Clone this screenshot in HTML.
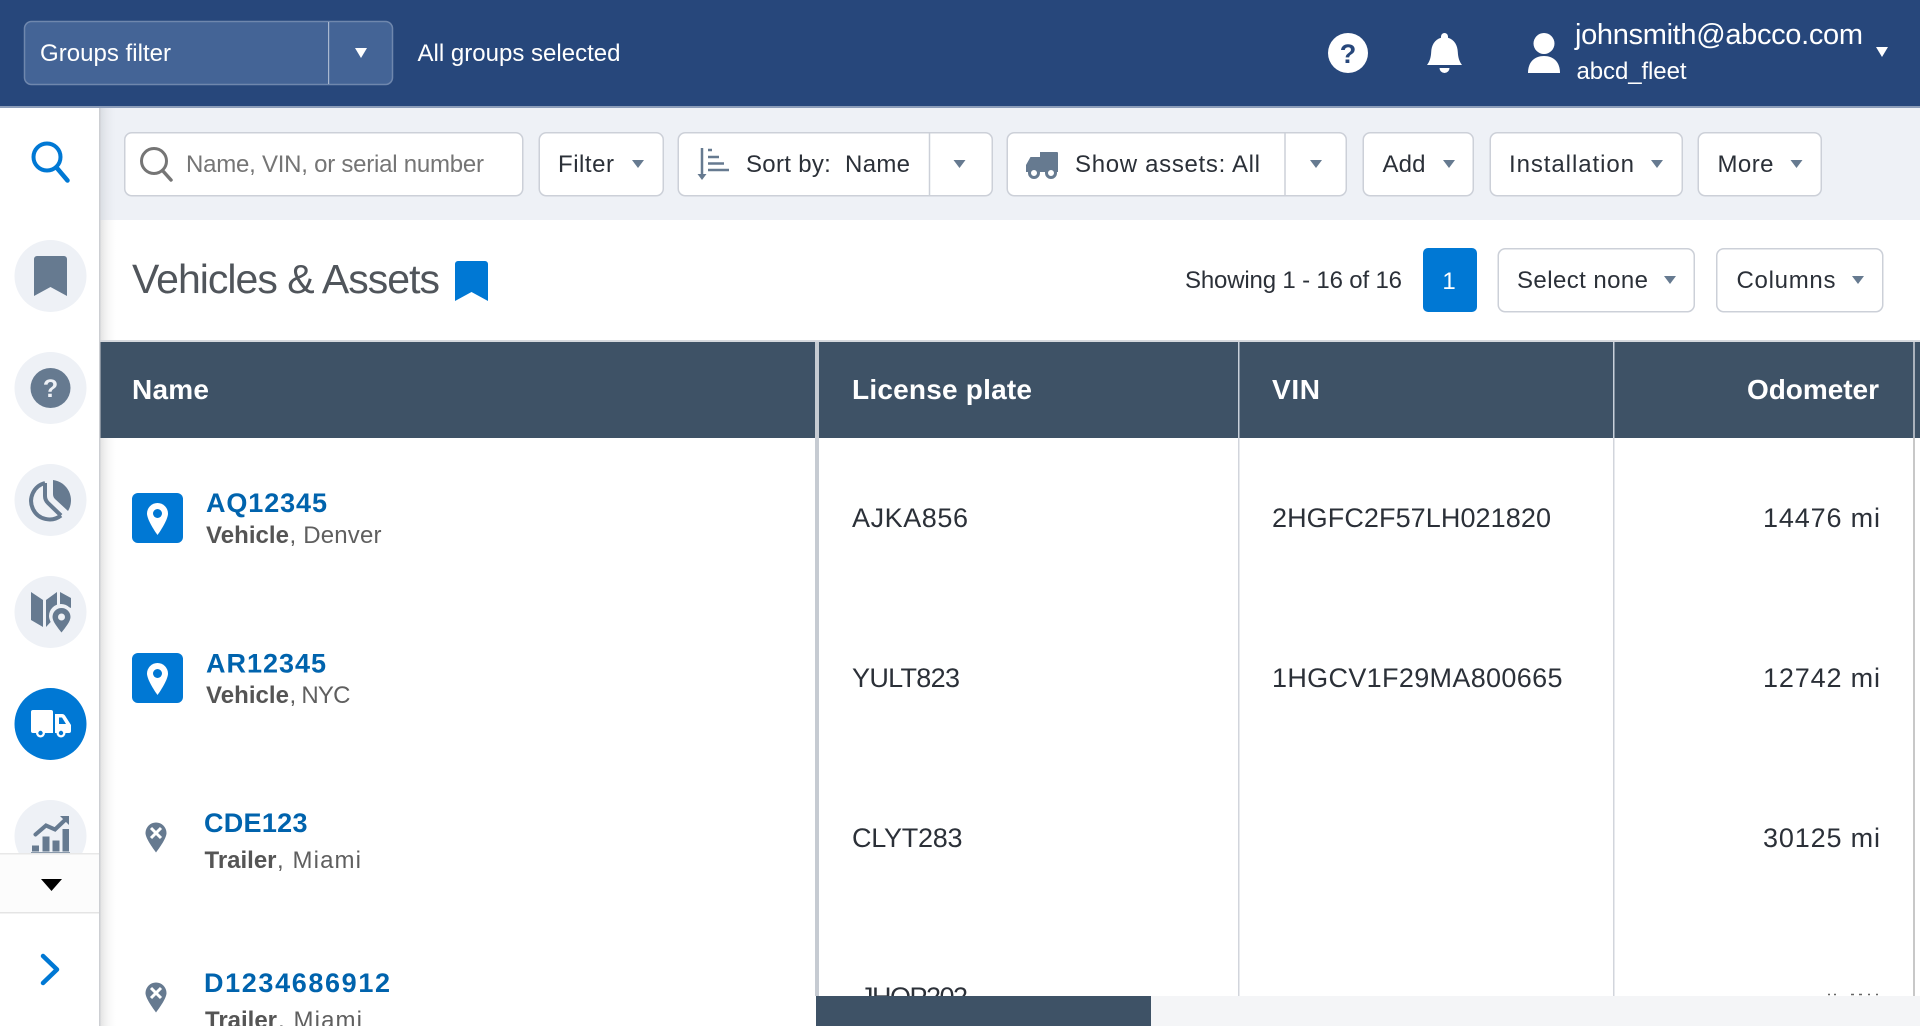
<!DOCTYPE html>
<html lang="en"><head><meta charset="utf-8"><title>Vehicles &amp; Assets</title>
<style>
html,body{margin:0;padding:0;width:1920px;height:1026px;overflow:hidden;background:#fff}
svg{display:block}
text{font-family:"Liberation Sans",Arial,sans-serif;white-space:pre}
.t{font-size:24px;fill:#2b3038}
.w{font-size:24px;fill:#fff}
.h{font-size:28px;font-weight:bold;fill:#fff}
.c{font-size:27px;fill:#2b3038}
.n{font-size:27px;font-weight:bold;fill:#0063ad}
.sb{font-size:24px;font-weight:bold;fill:#555}
.s{font-size:24px;fill:#5f5f5f}
.btn{fill:#fff;stroke:#ccd0d8;stroke-width:1.5}
.ln{stroke:#ccd0d8;stroke-width:1.5}
.car{fill:#667a90}
.ic{fill:#667a90}
.bub{fill:#eef1f6}
</style></head><body>
<svg width="1920" height="1026" viewBox="0 0 1920 1026" xmlns="http://www.w3.org/2000/svg">
<defs>
<linearGradient id="sh" x1="0" x2="1" y1="0" y2="0"><stop offset="0" stop-color="#e2e2e2"/><stop offset="1" stop-color="#fff" stop-opacity="0"/></linearGradient>
<linearGradient id="sh2" x1="0" x2="1" y1="0" y2="0"><stop offset="0" stop-color="#d9dce2"/><stop offset="1" stop-color="#eef1f6" stop-opacity="0"/></linearGradient>
<clipPath id="rows"><rect x="819" y="438" width="1101" height="558"/></clipPath>
<clipPath id="side"><rect x="0" y="108" width="99" height="745"/></clipPath>
</defs>

<!-- top bar -->
<rect x="0" y="0" width="1920" height="106" fill="#27477b"/>
<rect x="0" y="106" width="1920" height="2" fill="#8c9db9"/>
<rect x="24.5" y="21.5" width="368" height="63" rx="7" fill="#446496" stroke="#6f87ad" stroke-width="1.5"/>
<rect x="328" y="22" width="1.2" height="62" fill="#a9b8d0"/>
<text class="w" x="40" y="61" textLength="131">Groups filter</text>
<path d="M355 48h12l-6 10z" fill="#fff"/>
<text class="w" x="417.500" y="61" textLength="203">All groups selected</text>

<circle cx="1348" cy="53" r="20" fill="#fff"/>
<text x="1348" y="63" text-anchor="middle" font-size="27" font-weight="bold" fill="#27477b">?</text>
<path d="M1444.500 33a3.500 3.500 0 0 1 3.500 3.500v1.200c6.500 2 9.500 7.500 9.800 14.300c.3 5.500 1.500 9.500 4.200 13H1427c2.700-3.500 3.900-7.500 4.200-13c.3-6.800 3.300-12.300 9.800-14.300v-1.200a3.500 3.500 0 0 1 3.500-3.500z" fill="#fff"/>
<path d="M1439.500 68h10a5 5 0 0 1-10 0z" fill="#fff"/>
<circle cx="1544" cy="43.500" r="10.500" fill="#fff"/>
<path d="M1528 73c0-11 6.500-17 16-17s16 6 16 17z" fill="#fff"/>
<text x="1575" y="44" font-size="29" fill="#fff" textLength="288">johnsmith@abcco.com</text>
<text class="w" x="1576.500" y="79" textLength="110">abcd_fleet</text>
<path d="M1876 47h12l-6 10z" fill="#fff"/>

<!-- toolbar -->
<rect x="99" y="108" width="1821" height="112" fill="#eef1f6"/>
<rect x="100" y="108" width="18" height="112" fill="url(#sh2)"/>

<rect class="btn" x="124.750" y="132.750" width="398" height="63" rx="7"/>
<circle cx="154" cy="161" r="12.500" fill="none" stroke="#757575" stroke-width="3"/>
<path d="M162.500 170.500l8.500 9.500" stroke="#757575" stroke-width="3.500" stroke-linecap="round"/>
<text x="186" y="172" font-size="24" fill="#757575" textLength="298">Name, VIN, or serial number</text>

<rect class="btn" x="539.250" y="132.750" width="124" height="63" rx="7"/>
<text class="t" x="558" y="172" textLength="56">Filter</text>
<path class="car" d="M632 160h12l-6 8z"/>

<rect class="btn" x="678.250" y="132.750" width="314" height="63" rx="7"/>
<line class="ln" x1="929.500" y1="133" x2="929.500" y2="196"/>
<path d="M702 148v27M708 150h4M708 157h11M708 163.500h16M708 170h21" stroke="#667a90" stroke-width="2.500" fill="none"/>
<path class="car" d="M697.500 174h9l-4.500 6z"/>
<text class="t" x="746" y="172" textLength="164">Sort by:  Name</text>
<path class="car" d="M953.500 160h12l-6 8z"/>

<rect class="btn" x="1007.250" y="132.750" width="339" height="63" rx="7"/>
<line class="ln" x1="1285" y1="133" x2="1285" y2="196"/>
<path class="ic" d="M1040 152h17a1 1 0 0 1 1 1v19h-32v-7l4.500-8h9.500z"/>
<circle cx="1034" cy="173" r="4.500" fill="#fff" stroke="#667a90" stroke-width="3"/>
<circle cx="1051" cy="173" r="4.500" fill="#fff" stroke="#667a90" stroke-width="3"/>
<text class="t" x="1075" y="172" textLength="185">Show assets: All</text>
<path class="car" d="M1310 160h12l-6 8z"/>

<rect class="btn" x="1363.250" y="132.750" width="110" height="63" rx="7"/>
<text class="t" x="1382.500" y="172" textLength="43">Add</text>
<path class="car" d="M1443 160h12l-6 8z"/>

<rect class="btn" x="1490.250" y="132.750" width="192" height="63" rx="7"/>
<text class="t" x="1509" y="172" textLength="125">Installation</text>
<path class="car" d="M1651 160h12l-6 8z"/>

<rect class="btn" x="1698.250" y="132.750" width="123" height="63" rx="7"/>
<text class="t" x="1717.500" y="172" textLength="56">More</text>
<path class="car" d="M1790.500 160h12l-6 8z"/>

<!-- title row -->
<rect x="99" y="220" width="1821" height="120" fill="#fff"/>
<rect x="100" y="220" width="18" height="122" fill="url(#sh)"/>
<rect x="100" y="340" width="1820" height="2" fill="#d5d8dd"/>
<text x="132" y="293" font-size="41" fill="#50555b" textLength="308">Vehicles &amp; Assets</text>
<path d="M458 261h27a3 3 0 0 1 3 3v37l-16.500-9-16.500 9v-37a3 3 0 0 1 3-3z" fill="#0078d4"/>

<text class="t" x="1185" y="288" textLength="217">Showing 1 - 16 of 16</text>
<rect x="1423" y="248" width="54" height="64" rx="5" fill="#0078d4"/>
<text x="1449" y="289" text-anchor="middle" font-size="24" fill="#fff">1</text>
<rect class="btn" x="1498.250" y="248.750" width="196" height="63" rx="7"/>
<text class="t" x="1517" y="288" textLength="131">Select none</text>
<path class="car" d="M1664 276h12l-6 8z"/>
<rect class="btn" x="1716.750" y="248.750" width="166" height="63" rx="7"/>
<text class="t" x="1736.500" y="288" textLength="99">Columns</text>
<path class="car" d="M1852 276h12l-6 8z"/>

<!-- table header -->
<rect x="100" y="342" width="1820" height="96" fill="#3e5266"/>
<rect x="1238" y="342" width="1.500" height="96" fill="#c8d0da"/>
<rect x="1613" y="342" width="1.500" height="96" fill="#c8d0da"/>
<rect x="1913" y="342" width="2" height="96" fill="#aab2bc"/>
<text class="h" x="132" y="399" textLength="77">Name</text>
<text class="h" x="852" y="399" textLength="180">License plate</text>
<text class="h" x="1272" y="399" textLength="48">VIN</text>
<text class="h" x="1747" y="399" textLength="132">Odometer</text>

<!-- table body -->
<rect x="100" y="438" width="18" height="588" fill="url(#sh)"/>
<rect x="815" y="342" width="4" height="654" fill="#c6cbd2"/>
<rect x="1238" y="438" width="1.500" height="558" fill="#d2d5dc"/>
<rect x="1613" y="438" width="1.500" height="558" fill="#d2d5dc"/>
<rect x="1913" y="438" width="2" height="558" fill="#c8c8c8"/>

<rect x="132" y="493" width="51" height="50" rx="6" fill="#0078d4"/>
<path d="M157.500 503a10.500 10.500 0 0 1 10.500 10.500c0 5.500-6.500 16-10.500 21.500c-4-5.500-10.500-16-10.500-21.500a10.500 10.500 0 0 1 10.500-10.500z" fill="#fff"/>
<circle cx="157.500" cy="513.500" r="4.500" fill="#0078d4"/>
<text class="n" x="206" y="512" textLength="121">AQ12345</text>
<text class="sb" x="206" y="543" textLength="83">Vehicle</text>
<text class="s" x="289.500" y="543" textLength="92">, Denver</text>

<rect x="132" y="653" width="51" height="50" rx="6" fill="#0078d4"/>
<path d="M157.500 663a10.500 10.500 0 0 1 10.500 10.500c0 5.500-6.500 16-10.500 21.500c-4-5.500-10.500-16-10.500-21.500a10.500 10.500 0 0 1 10.500-10.500z" fill="#fff"/>
<circle cx="157.500" cy="673.500" r="4.500" fill="#0078d4"/>
<text class="n" x="206" y="672.500" textLength="120">AR12345</text>
<text class="sb" x="206" y="703" textLength="83">Vehicle</text>
<text class="s" x="289.500" y="703" textLength="61">, NYC</text>

<path class="ic" d="M156 822.500a10.500 10.500 0 0 1 10.500 10.500c0 5-6.500 14-10.500 19.500c-4-5.500-10.500-14.500-10.500-19.500a10.500 10.500 0 0 1 10.500-10.500z"/>
<path d="M151 828l10 10M161 828l-10 10" stroke="#fff" stroke-width="3"/>
<text class="n" x="204" y="832" textLength="103.500">CDE123</text>
<text class="sb" x="204.500" y="868" textLength="72">Trailer</text>
<text class="s" x="277" y="868" textLength="84">, Miami</text>

<path class="ic" d="M156 982.500a10.500 10.500 0 0 1 10.500 10.500c0 5-6.500 14-10.500 19.500c-4-5.500-10.500-14.500-10.500-19.500a10.500 10.500 0 0 1 10.500-10.500z"/>
<path d="M151 988l10 10M161 988l-10 10" stroke="#fff" stroke-width="3"/>
<text class="n" x="204" y="992" textLength="186">D1234686912</text>
<text class="sb" x="205" y="1028" textLength="72">Trailer</text>
<text class="s" x="278" y="1028" textLength="84">, Miami</text>

<g clip-path="url(#rows)">
<text class="c" x="852" y="527" textLength="116">AJKA856</text>
<text class="c" x="1272" y="527" textLength="279">2HGFC2F57LH021820</text>
<text class="c" x="1763" y="527" textLength="117">14476 mi</text>
<text class="c" x="852" y="687" textLength="108">YULT823</text>
<text class="c" x="1272" y="687" textLength="290.500">1HGCV1F29MA800665</text>
<text class="c" x="1763" y="687" textLength="117">12742 mi</text>
<text class="c" x="852" y="847" textLength="110.500">CLYT283</text>
<text class="c" x="1763" y="847" textLength="117">30125 mi</text>
<text class="c" x="860" y="1006" textLength="108">JHOP202</text>
<path d="M1828 994.500h2M1834 994.500h2M1851 994.500h3M1859 994.500h3M1868 994.500h2M1876 994.500h2" stroke="#666" stroke-width="1.500"/>
</g>

<!-- horizontal scrollbar -->
<rect x="816" y="996" width="1104" height="30" fill="#f4f5f7"/>
<rect x="816" y="996" width="335" height="30" fill="#3e5266"/>

<!-- sidebar -->
<rect x="0" y="108" width="99" height="918" fill="#fff"/>
<rect x="99" y="108" width="1.500" height="918" fill="#cdcfd3"/>
<circle cx="47" cy="157" r="13.500" fill="none" stroke="#0078d4" stroke-width="4"/>
<path d="M56.500 167.500l11 13" stroke="#0078d4" stroke-width="4.500" stroke-linecap="round"/>

<g clip-path="url(#side)">
<circle class="bub" cx="50.500" cy="276" r="36"/>
<path class="ic" d="M37 256h27a3 3 0 0 1 3 3v37l-16.500-9-16.500 9v-37a3 3 0 0 1 3-3z"/>

<circle class="bub" cx="50.500" cy="388" r="36"/>
<circle class="ic" cx="50.500" cy="388" r="20"/>
<text x="50.500" y="397" text-anchor="middle" font-size="25" font-weight="bold" fill="#eef1f6">?</text>

<circle class="bub" cx="50.500" cy="500" r="36"/>
<path d="M45 483A18.500 18.500 0 1 0 61 515.500M45 483V496Q45 500 48 503L61 515.500" fill="none" stroke="#667a90" stroke-width="4" stroke-linejoin="round"/>
<path class="ic" d="M53 480A20.500 20.500 0 0 1 68 511L55 499Q53 497 53 494Z"/>

<circle class="bub" cx="50.500" cy="612" r="36"/>
<path class="ic" d="M31 592l12 8v27l-12-7zM46 600l11-8v18c-3 3-5 7-4.500 10l-6.500 7zM60 592l11 6v10c-3-1.500-7-2-11-1z"/>
<path class="bub" d="M61 604a12 12 0 0 1 12 12c0 6-7 14-12 20c-5-6-12-14-12-20a12 12 0 0 1 12-12z"/>
<path class="ic" d="M61.500 608a9 9 0 0 1 9 9c0 4.500-5.500 11-9 15.500c-3.500-4.500-9-11-9-15.500a9 9 0 0 1 9-9z"/>
<circle class="bub" cx="61.500" cy="617" r="3.500"/>

<circle cx="50.500" cy="724" r="36" fill="#0078d4"/>
<path d="M33 710h18a2 2 0 0 1 2 2v21H33a2 2 0 0 1-2-2v-19a2 2 0 0 1 2-2z" fill="#fff"/>
<path d="M55 714h7c1.500 0 2.500 .7 3.300 2l5.700 9v6a2 2 0 0 1-2 2H55z" fill="#fff"/>
<path d="M59 717.500h3l4 6.500h-7z" fill="#0078d4"/>
<circle cx="40.500" cy="733" r="4.500" fill="#fff"/><circle cx="40.500" cy="733" r="2.200" fill="#0078d4"/>
<circle cx="61" cy="733" r="4.500" fill="#fff"/><circle cx="61" cy="733" r="2.200" fill="#0078d4"/>

<circle class="bub" cx="50.500" cy="836" r="36"/>
<path class="ic" d="M32 845.500h7v6h-7zM42.500 836.500h7v15h-7zM52.500 840.500h7v11h-7zM62.500 829h6.500v22.500h-6.500z"/>
<rect x="31" y="852" width="39" height="1" fill="#8a9aac"/>
</g>
<path d="M35.500 834.500L46 825.500L55 829.500L65 820" fill="none" stroke="#667a90" stroke-width="4" stroke-linecap="round"/>
<path class="ic" d="M60 816h9v9z"/>

<rect x="0" y="853" width="99" height="60" fill="#fcfcfc"/>
<rect x="0" y="853" width="99" height="1.500" fill="#e8e8e8"/>
<rect x="0" y="912" width="99" height="1.500" fill="#e4e4e4"/>
<path d="M41 879h21l-10.500 12z" fill="#000"/>
<path d="M43 956l14 13.500-14 13.500" fill="none" stroke="#0078d4" stroke-width="4.500" stroke-linecap="round" stroke-linejoin="round"/>
</svg>
</body></html>
